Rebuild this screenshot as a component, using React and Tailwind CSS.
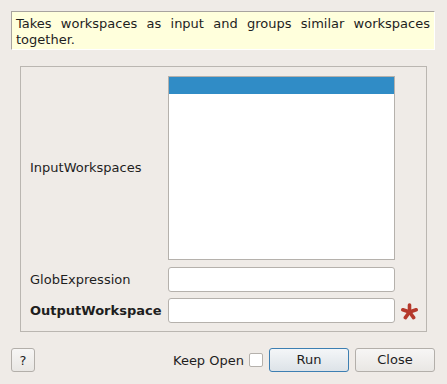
export default function App() {
  const font = { fontFamily: '"DejaVu Sans", sans-serif' };
  return (
    <div
      className="w-[447px] h-[384px] bg-[#efebe7] text-[13px] text-[#1e1e1e] overflow-hidden flex flex-col"
      style={font}
    >
      <div className="mt-[11px] ml-[11px] w-[424px] h-[39px] bg-[#ffffdc] border-l border-t border-[#a8a49f] border-r-white border-b-white border-r border-b px-[4px] pt-[4px] leading-[16px] text-justify">
        Takes workspaces as input and groups similar workspaces together.
      </div>

      <div className="mt-[16px] ml-[20px] w-[407px] h-[266px] border border-[#bab6b1] pt-[9px] pl-[9px] flex flex-col">
        <div className="flex items-center">
          <div className="w-[138px]">InputWorkspaces</div>
          <div className="w-[227px] h-[184px] bg-white border border-[#b5b1ac] p-0">
            <div className="h-[17px] bg-[#308cc6]"></div>
          </div>
        </div>
        <div className="flex items-center mt-[7px]">
          <div className="w-[138px]">GlobExpression</div>
          <div className="w-[227px] h-[25px] bg-white border border-[#b5b1ac] rounded-[3px]"></div>
        </div>
        <div className="flex items-center mt-[6px]">
          <div className="w-[138px] font-bold">OutputWorkspace</div>
          <div className="w-[227px] h-[25px] bg-white border border-[#b5b1ac] rounded-[3px]"></div>
          <svg width="17" height="17" viewBox="0 0 17 17" className="ml-[6px] mt-[2px]">
            {[-90, -18, 54, 126, 198].map((a) => {
              const r = (a * Math.PI) / 180;
              return (
                <line
                  key={a}
                  x1="8.5"
                  y1="9"
                  x2={8.5 + 7 * Math.cos(r)}
                  y2={9 + 7 * Math.sin(r)}
                  stroke="#b5392c"
                  strokeWidth="3.6"
                  strokeLinecap="round"
                />
              );
            })}
          </svg>
        </div>
      </div>

      <div className="mt-[16px] flex items-center h-[24px]">
        <button className="ml-[11px] w-[24px] h-[24px] border border-[#b3afaa] rounded-[3px] bg-gradient-to-b from-[#f7f6f5] to-[#e9e7e4] text-[13px] leading-none">
          ?
        </button>
        <div className="ml-[138px] pt-[1px]">Keep Open</div>
        <div className="ml-[5px] w-[14px] h-[14px] bg-white border border-[#b5b1ac] rounded-[2px]"></div>
        <button className="ml-[6px] w-[80px] h-[24px] border border-[#3d7fb2] rounded-[3px] bg-gradient-to-b from-[#f4f6f8] to-[#dde3e8] text-[13px]">
          Run
        </button>
        <button className="ml-[6px] w-[80px] h-[24px] border border-[#b3afaa] rounded-[3px] bg-gradient-to-b from-[#f7f6f5] to-[#e9e7e4] text-[13px]">
          Close
        </button>
      </div>
    </div>
  );
}
